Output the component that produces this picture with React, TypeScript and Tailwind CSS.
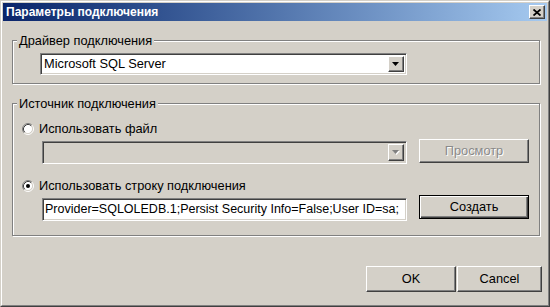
import type { ReactNode } from "react";

const sunken =
  "border border-t-[#808080] border-l-[#808080] border-b-white border-r-white shadow-[inset_1px_1px_0_#404040,inset_-1px_-1px_0_#d4d0c8]";
const raised =
  "border border-t-white border-l-white border-b-[#404040] border-r-[#404040] shadow-[inset_-1px_-1px_0_#808080]";

function GroupBox({ title, className, children }: { title: string; className?: string; children: ReactNode }) {
  return (
    <div className={`border border-[#808080] shadow-[1px_1px_0_#fff,inset_1px_1px_0_#fff] ${className ?? ""}`}>
      <span className="-mt-[8px] ml-[4px] block h-[15px] w-fit bg-[#d4d0c8] px-[2px] leading-[15px]">{title}</span>
      {children}
    </div>
  );
}

function Radio({ checked }: { checked?: boolean }) {
  return (
    <svg width="12" height="12" viewBox="0 0 12 12" className="shrink-0">
      <circle cx="6" cy="6" r="4.5" fill="#fff" />
      <path d="M2.11 9.89 A5.5 5.5 0 0 1 9.89 2.11" fill="none" stroke="#808080" />
      <path d="M9.89 2.11 A5.5 5.5 0 0 1 2.11 9.89" fill="none" stroke="#fff" />
      <path d="M2.82 9.18 A4.5 4.5 0 0 1 9.18 2.82" fill="none" stroke="#404040" />
      <path d="M9.18 2.82 A4.5 4.5 0 0 1 2.82 9.18" fill="none" stroke="#d4d0c8" />
      {checked ? <circle cx="6" cy="6" r="2" fill="#000" /> : null}
    </svg>
  );
}

function DropArrow({ disabled }: { disabled?: boolean }) {
  return (
    <div className={`flex h-full w-[16px] shrink-0 items-center justify-center bg-[#d4d0c8] ${raised}`}>
      <svg width="8" height="5" viewBox="0 0 8 5">
        {disabled ? <path d="M1 1h7l-3.5 4z" fill="#fff" /> : null}
        <path d="M0 0h7l-3.5 4z" fill={disabled ? "#808080" : "#000"} />
      </svg>
    </div>
  );
}

function Combo({ value, disabled, className }: { value?: string; disabled?: boolean; className?: string }) {
  return (
    <div className={`flex items-stretch p-[2px] ${disabled ? "bg-[#d4d0c8]" : "bg-white"} ${sunken} ${className ?? ""}`}>
      <div className="flex min-w-0 flex-1 items-center pl-[1px] whitespace-nowrap">{value}</div>
      <DropArrow disabled={disabled} />
    </div>
  );
}

function Button({ label, disabled, isDefault, className }: { label: string; disabled?: boolean; isDefault?: boolean; className?: string }) {
  const frame = isDefault
    ? "border border-black shadow-[inset_1px_1px_0_#fff,inset_-1px_-1px_0_#404040,inset_-2px_-2px_0_#808080]"
    : raised;
  return (
    <button
      type="button"
      className={`flex items-center justify-center bg-[#d4d0c8] ${frame} ${disabled ? "text-[#8a8a8a] [text-shadow:1px_1px_0_#fff]" : "text-black"} ${className ?? ""}`}
    >
      {label}
    </button>
  );
}

export default function App() {
  return (
    <div className="h-[307px] w-[550px] border border-t-[#d4d0c8] border-l-[#d4d0c8] border-b-[#404040] border-r-[#404040] bg-[#d4d0c8] font-['Liberation_Sans',sans-serif] text-[12.8px] text-black">
      <div className="flex h-full flex-col border border-t-white border-l-white border-b-[#808080] border-r-[#808080] p-[1px]">
        <div className="flex h-[18px] shrink-0 items-center justify-between bg-gradient-to-r from-[#0a246a] to-[#a6caf0] pl-[3px] pr-[2px]">
          <span className="text-[12px] font-bold text-white">Параметры подключения</span>
          <div className={`flex h-[14px] w-[16px] items-center justify-center bg-[#d4d0c8] ${raised}`}>
            <svg width="8" height="7" viewBox="0 0 8 7">
              <path d="M0.5 0.5 L7.5 6.5 M7.5 0.5 L0.5 6.5" stroke="#000" strokeWidth="1.8" />
            </svg>
          </div>
        </div>

        <div className="flex flex-col pl-[9px] pr-[7px]">
          <GroupBox title="Драйвер подключения" className="mt-[19px] pb-[8px]">
            <Combo value="Microsoft SQL Server" className="ml-[27px] mt-[5px] h-[22px] w-[367px]" />
          </GroupBox>

          <GroupBox title="Источник подключения" className="mt-[19px] pb-[14px]">
            <div className="ml-[9px] mt-[10px] flex h-[15px] items-center gap-[5px]">
              <Radio />
              <span>Использовать файл</span>
            </div>
            <div className="ml-[29px] mt-[3px] flex items-start gap-[12px]">
              <Combo disabled className="mt-[2px] h-[23px] w-[365px]" />
              <Button label="Просмотр" disabled className="h-[24px] w-[110px]" />
            </div>

            <div className="ml-[9px] mt-[14px] flex h-[15px] items-center gap-[5px]">
              <Radio checked />
              <span>Использовать строку подключения</span>
            </div>
            <div className="ml-[29px] mt-[2px] flex items-start gap-[12px]">
              <div className={`mt-[3px] flex h-[23px] w-[365px] items-center overflow-hidden bg-white pl-[2px] text-[12.5px] whitespace-nowrap ${sunken}`}>
                Provider=SQLOLEDB.1;Persist Security Info=False;User ID=sa;
              </div>
              <Button label="Создать" isDefault className="h-[24px] w-[110px]" />
            </div>
          </GroupBox>
        </div>

        <div className="mt-[30px] flex justify-end gap-[1px] pr-[5px]">
          <Button label="OK" className="h-[26px] w-[90px]" />
          <Button label="Cancel" className="h-[26px] w-[85px]" />
        </div>
      </div>
    </div>
  );
}
